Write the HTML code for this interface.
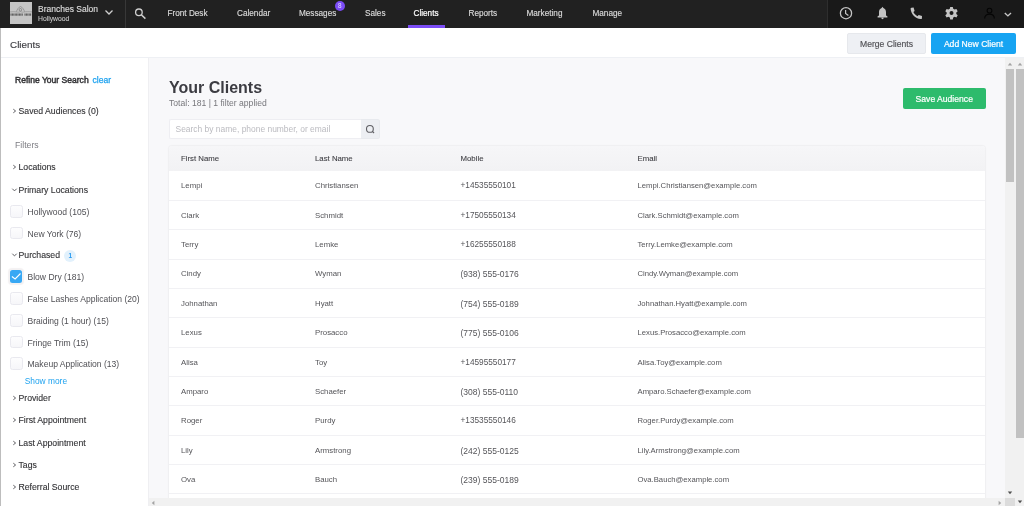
<!DOCTYPE html>
<html><head><meta charset="utf-8">
<style>
*{margin:0;padding:0;box-sizing:border-box}
html,body{width:1024px;height:506px;overflow:hidden;background:#fff;font-family:"Liberation Sans",sans-serif;}
.a{position:absolute;white-space:nowrap}
.nv{position:absolute;top:8px;height:12px;line-height:12px;font-size:8.2px;color:#dadada;-webkit-text-stroke:0.15px #dadada}
.t{position:absolute;white-space:nowrap;height:12px;line-height:12px}
</style></head><body>
<div style="position:absolute;left:0;top:0;width:1024px;height:506px;will-change:transform">
<div class="a" style="left:0px;top:0px;width:1024px;height:28px;background:#212121"></div>
<svg class="a" style="left:10px;top:2px" width="22" height="22" viewBox="0 0 22 22"><rect width="22" height="22" fill="#c5c5c5"/>
<circle cx="10.4" cy="7.8" r="1.3" stroke="#6a6a6a" stroke-width="0.6" fill="none"/>
<path d="M6.4 9.6 C7.2 7.4 8.6 5.2 10.5 4.5 C12.4 5.2 13.8 7.4 14.6 9.6" stroke="#7a7a7a" stroke-width="0.6" fill="none"/>
<path d="M0 9.9 C2.5 9.6 5 9.6 7 10 C8.5 10.3 9.5 10.2 10.5 9.6 C11.5 10.2 12.5 10.3 14 10 C16 9.6 19 9.6 22 9.9" stroke="#7a7a7a" stroke-width="0.5" fill="none"/>
<rect x="0.50" y="11.5" width="1.05" height="2.2" fill="#5c5c5c"/><rect x="1.90" y="11.5" width="1.05" height="2.2" fill="#5c5c5c"/><rect x="3.30" y="11.5" width="1.05" height="2.2" fill="#5c5c5c"/><rect x="4.70" y="11.5" width="1.05" height="2.2" fill="#5c5c5c"/><rect x="6.10" y="11.5" width="1.05" height="2.2" fill="#5c5c5c"/><rect x="7.50" y="11.5" width="1.05" height="2.2" fill="#5c5c5c"/><rect x="8.90" y="11.5" width="1.05" height="2.2" fill="#5c5c5c"/><rect x="10.30" y="11.5" width="1.05" height="2.2" fill="#5c5c5c"/><rect x="11.70" y="11.5" width="1.05" height="2.2" fill="#5c5c5c"/><rect x="14.50" y="11.5" width="1.05" height="2.2" fill="#5c5c5c"/><rect x="15.90" y="11.5" width="1.05" height="2.2" fill="#5c5c5c"/><rect x="17.30" y="11.5" width="1.05" height="2.2" fill="#5c5c5c"/><rect x="18.70" y="11.5" width="1.05" height="2.2" fill="#5c5c5c"/><rect x="20.10" y="11.5" width="1.05" height="2.2" fill="#5c5c5c"/>
</svg>
<div class="a" style="left:38px;top:3.4px;font-size:8.5px;line-height:12px;color:#dcdcdc;-webkit-text-stroke:0.15px #dcdcdc">Branches Salon</div>
<div class="a" style="left:38px;top:14px;font-size:6.8px;line-height:10px;color:#c4c4c4;-webkit-text-stroke:0.1px #c4c4c4">Hollywood</div>
<svg class="a" style="left:104px;top:9px" width="10" height="7" viewBox="0 0 10 7"><path d="M1.5 1.5 L5 5 L8.5 1.5" stroke="#cfcfcf" stroke-width="1.3" fill="none"/></svg>
<div class="a" style="left:125px;top:0px;width:1px;height:28px;background:#383838"></div>
<svg class="a" style="left:132px;top:6px" width="16" height="16" viewBox="0 0 16 16"><circle cx="6.9" cy="6.3" r="3.3" stroke="#cfcfcf" stroke-width="1.3" fill="none"/><path d="M9.3 8.8 L13.4 12.6" stroke="#cfcfcf" stroke-width="1.5"/></svg>
<div class="nv" style="left:167.5px">Front Desk</div>
<div class="nv" style="left:237px">Calendar</div>
<div class="nv" style="left:299px">Messages</div>
<div class="nv" style="left:365px">Sales</div>
<div class="nv" style="left:468.5px">Reports</div>
<div class="nv" style="left:526.5px">Marketing</div>
<div class="nv" style="left:592.5px">Manage</div>
<div class="nv" style="left:413.5px;color:#fff;-webkit-text-stroke:0.2px #fff">Clients</div>
<div class="a" style="left:334.7px;top:0.6px;width:10px;height:10px;border-radius:5px;background:#7b4cf6;color:#e6dcff;font-size:6.4px;line-height:10px;text-align:center">8</div>
<div class="a" style="left:408px;top:25.2px;width:37px;height:2.8px;background:#7b4cf6"></div>
<div class="a" style="left:827px;top:0px;width:197px;height:28px;background:#191919;border-left:1px solid #2e2e2e"></div>
<svg class="a" style="left:828px;top:0" width="196" height="28" viewBox="828 0 196 28">
    <circle cx="846" cy="13.2" r="5.6" stroke="#c4c4c4" stroke-width="1.3" fill="none"/>
    <path d="M845.6 10.1 V13.4 L848.4 15.5" stroke="#c4c4c4" stroke-width="1.2" fill="none"/>
    <path d="M882.5 6.8 L883.4 7.9 C885.1 8.6 886 10 886 12 V15.4 L887.4 16.2 V17.5 H877.6 V16.2 L879 15.4 V12 C879 10 879.9 8.6 881.6 7.9 Z" fill="#c4c4c4"/>
    <path d="M881.3 17.6 H883.7 C883.7 18.6 883.1 19.2 882.5 19.2 C881.9 19.2 881.3 18.6 881.3 17.6Z" fill="#c4c4c4"/>
    <path d="M911.5 7.7 L913.6 7.6 L914.6 10.9 L913.4 12 C914.1 13.6 915.5 15.2 917.5 16.2 L918.7 15.1 L922 15.9 L921.9 18.4 C921.8 18.9 921.3 19.2 920.7 19.1 C915.1 18.6 911.1 14.3 910.6 8.8 C910.6 8.2 910.9 7.8 911.5 7.7Z" fill="#c4c4c4"/>
    <g transform="translate(951.5 13.1)" fill="#c4c4c4">
      <path d="M-1.3 -6.1 H1.3 L1.7 -4.3 L3.1 -3.5 L4.9 -4.1 L6.2 -1.9 L4.8 -0.7 V0.9 L6.2 2.1 L4.9 4.3 L3.1 3.7 L1.7 4.5 L1.3 6.3 H-1.3 L-1.7 4.5 L-3.1 3.7 L-4.9 4.3 L-6.2 2.1 L-4.8 0.9 V-0.7 L-6.2 -1.9 L-4.9 -4.1 L-3.1 -3.5 L-1.7 -4.3Z M0 -2 A2 2 0 1 0 0 2 A2 2 0 1 0 0 -2Z" fill-rule="evenodd"/>
    </g>
    <circle cx="989.5" cy="10.6" r="2.4" stroke="#050505" stroke-width="1.1" fill="none"/>
    <path d="M984.7 18.4 C984.7 15.5 986.8 14.1 989.5 14.1 C992.2 14.1 994.3 15.5 994.3 18.4" stroke="#050505" stroke-width="1.1" fill="none"/>
    <path d="M1004.8 13 L1007.9 15.9 L1011 13" stroke="#c8c8c8" stroke-width="1.4" fill="none"/>
  </svg>
<div class="a" style="left:0px;top:28px;width:1024px;height:30px;background:#fff;border-bottom:1px solid #eef0f4"></div>
<div class="a" style="left:10px;top:38.5px;font-size:9.9px;line-height:12px;color:#3d3d42;-webkit-text-stroke:0.15px #3d3d42">Clients</div>
<div class="a" style="left:847px;top:33px;width:79px;height:21px;border-radius:2px;background:#eef0f4;border:1px solid #e6e8ec;color:#505055;line-height:21px;font-size:8.6px;text-align:center;-webkit-text-stroke:0.15px #505055">Merge Clients</div>
<div class="a" style="left:931px;top:33px;width:85px;height:21px;border-radius:2px;background:#17a4f2;color:#fff;line-height:22.5px;font-size:8.6px;text-align:center;-webkit-text-stroke:0.2px #fff">Add New Client</div>
<div class="a" style="left:0px;top:58px;width:149px;height:448px;background:#fff;border-right:1px solid #efeff2"></div>
<div class="a" style="left:0px;top:28px;width:1px;height:478px;background:#bdbdbd"></div>
<div class="t" style="left:15px;top:74.40px;height:12px;line-height:12px;font-size:8.55px;color:#333336;-webkit-text-stroke:0.45px #333336">Refine Your Search<span style="color:#1ea2ef;-webkit-text-stroke:0.25px #1ea2ef;font-size:8.6px;margin-left:3.8px">clear</span></div>
<svg class="a" style="left:11px;top:106.6px" width="6" height="8" viewBox="0 0 6 8"><path d="M2.3 2.2 L4.6 4 L2.3 5.8" stroke="#505055" stroke-width="0.9" fill="none"/></svg>
<div class="t" style="left:18.5px;top:104.90px;height:12px;line-height:12px;font-size:8.7px;color:#333336;-webkit-text-stroke:0.12px #333336">Saved Audiences (0)</div>
<svg class="a" style="left:11px;top:163.1px" width="6" height="8" viewBox="0 0 6 8"><path d="M2.3 2.2 L4.6 4 L2.3 5.8" stroke="#505055" stroke-width="0.9" fill="none"/></svg>
<div class="t" style="left:18.5px;top:161.40px;height:12px;line-height:12px;font-size:8.7px;color:#333336;-webkit-text-stroke:0.12px #333336">Locations</div>
<svg class="a" style="left:10px;top:186.7px" width="8" height="6" viewBox="0 0 8 6"><path d="M2.3 1.7 L4.5 3.9 L6.7 1.7" stroke="#505055" stroke-width="0.9" fill="none"/></svg>
<div class="t" style="left:18.5px;top:183.90px;height:12px;line-height:12px;font-size:8.7px;color:#333336;-webkit-text-stroke:0.12px #333336">Primary Locations</div>
<svg class="a" style="left:10px;top:252.2px" width="8" height="6" viewBox="0 0 8 6"><path d="M2.3 1.7 L4.5 3.9 L6.7 1.7" stroke="#505055" stroke-width="0.9" fill="none"/></svg>
<div class="t" style="left:18.5px;top:249.40px;height:12px;line-height:12px;font-size:8.7px;color:#333336;-webkit-text-stroke:0.12px #333336">Purchased</div>
<svg class="a" style="left:11px;top:394.1px" width="6" height="8" viewBox="0 0 6 8"><path d="M2.3 2.2 L4.6 4 L2.3 5.8" stroke="#505055" stroke-width="0.9" fill="none"/></svg>
<div class="t" style="left:18.5px;top:392.40px;height:12px;line-height:12px;font-size:8.7px;color:#333336;-webkit-text-stroke:0.12px #333336">Provider</div>
<svg class="a" style="left:11px;top:416.1px" width="6" height="8" viewBox="0 0 6 8"><path d="M2.3 2.2 L4.6 4 L2.3 5.8" stroke="#505055" stroke-width="0.9" fill="none"/></svg>
<div class="t" style="left:18.5px;top:414.40px;height:12px;line-height:12px;font-size:8.7px;color:#333336;-webkit-text-stroke:0.12px #333336">First Appointment</div>
<svg class="a" style="left:11px;top:438.6px" width="6" height="8" viewBox="0 0 6 8"><path d="M2.3 2.2 L4.6 4 L2.3 5.8" stroke="#505055" stroke-width="0.9" fill="none"/></svg>
<div class="t" style="left:18.5px;top:436.90px;height:12px;line-height:12px;font-size:8.7px;color:#333336;-webkit-text-stroke:0.12px #333336">Last Appointment</div>
<svg class="a" style="left:11px;top:460.6px" width="6" height="8" viewBox="0 0 6 8"><path d="M2.3 2.2 L4.6 4 L2.3 5.8" stroke="#505055" stroke-width="0.9" fill="none"/></svg>
<div class="t" style="left:18.5px;top:458.90px;height:12px;line-height:12px;font-size:8.7px;color:#333336;-webkit-text-stroke:0.12px #333336">Tags</div>
<svg class="a" style="left:11px;top:483.1px" width="6" height="8" viewBox="0 0 6 8"><path d="M2.3 2.2 L4.6 4 L2.3 5.8" stroke="#505055" stroke-width="0.9" fill="none"/></svg>
<div class="t" style="left:18.5px;top:481.40px;height:12px;line-height:12px;font-size:8.7px;color:#333336;-webkit-text-stroke:0.12px #333336">Referral Source</div>
<div class="t" style="left:15px;top:139.40px;height:12px;line-height:12px;font-size:8.7px;color:#7c7c82;">Filters</div>
<div class="a" style="left:10.3px;top:205.20px;width:12.4px;height:12.4px;border:1px solid #e9e9ef;border-radius:2.5px;background:linear-gradient(#fdfdfe,#f6f6f9)"></div>
<div class="t" style="left:27.5px;top:206.00px;height:12px;line-height:12px;font-size:8.55px;color:#505055;">Hollywood (105)</div>
<div class="a" style="left:10.3px;top:226.70px;width:12.4px;height:12.4px;border:1px solid #e9e9ef;border-radius:2.5px;background:linear-gradient(#fdfdfe,#f6f6f9)"></div>
<div class="t" style="left:27.5px;top:227.50px;height:12px;line-height:12px;font-size:8.55px;color:#505055;">New York (76)</div>
<div class="a" style="left:10.3px;top:270.40px;width:12.2px;height:12.2px;border-radius:2.5px;background:#38a8f4;box-shadow:0 0 1px 1.5px #f3f1f2"><svg class="a" style="left:0;top:0" width="12" height="12" viewBox="0 0 12 12"><path d="M1.9 6.5 L5.1 8.9 L10.5 3.5" stroke="#fff" stroke-width="1.1" fill="none"/></svg></div>
<div class="t" style="left:27.5px;top:271.00px;height:12px;line-height:12px;font-size:8.55px;color:#505055;">Blow Dry (181)</div>
<div class="a" style="left:10.3px;top:292.20px;width:12.4px;height:12.4px;border:1px solid #e9e9ef;border-radius:2.5px;background:linear-gradient(#fdfdfe,#f6f6f9)"></div>
<div class="t" style="left:27.5px;top:293.00px;height:12px;line-height:12px;font-size:8.55px;color:#505055;">False Lashes Application (20)</div>
<div class="a" style="left:10.3px;top:314.20px;width:12.4px;height:12.4px;border:1px solid #e9e9ef;border-radius:2.5px;background:linear-gradient(#fdfdfe,#f6f6f9)"></div>
<div class="t" style="left:27.5px;top:315.00px;height:12px;line-height:12px;font-size:8.55px;color:#505055;">Braiding (1 hour) (15)</div>
<div class="a" style="left:10.3px;top:335.70px;width:12.4px;height:12.4px;border:1px solid #e9e9ef;border-radius:2.5px;background:linear-gradient(#fdfdfe,#f6f6f9)"></div>
<div class="t" style="left:27.5px;top:336.50px;height:12px;line-height:12px;font-size:8.55px;color:#505055;">Fringe Trim (15)</div>
<div class="a" style="left:10.3px;top:357.20px;width:12.4px;height:12.4px;border:1px solid #e9e9ef;border-radius:2.5px;background:linear-gradient(#fdfdfe,#f6f6f9)"></div>
<div class="t" style="left:27.5px;top:358.00px;height:12px;line-height:12px;font-size:8.55px;color:#505055;">Makeup Application (13)</div>
<div class="a" style="left:64.3px;top:249.6px;width:12px;height:12px;border-radius:6px;background:#e2f1fc;color:#2a9bf0;font-size:6.5px;font-weight:bold;line-height:12px;text-align:center">1</div>
<div class="t" style="left:24.7px;top:375.00px;height:12px;line-height:12px;font-size:8.4px;color:#1ea2ef;">Show more</div>
<div class="a" style="left:149px;top:58px;width:856px;height:440px;background:#f8f8fa"></div>
<div class="a" style="left:169px;top:75.9px;font-size:16px;line-height:24px;font-weight:bold;color:#3c3c42">Your Clients</div>
<div class="a" style="left:169px;top:96.9px;font-size:8.6px;line-height:12px;color:#77777c">Total: 181 | 1 filter applied</div>
<div class="a" style="left:903px;top:88px;width:82.5px;height:21px;border-radius:2px;background:#2dbb6c;color:#fff;font-size:8.6px;line-height:22.5px;text-align:center;-webkit-text-stroke:0.2px #fff">Save Audience</div>
<div class="a" style="left:169px;top:119.2px;width:192px;height:20px;background:#fff;border:1px solid #eeeef2;border-right:none;border-radius:2px 0 0 2px;color:#bbbbc0;font-size:8.45px;line-height:18px;padding-left:5.5px">Search by name, phone number, or email</div>
<div class="a" style="left:361px;top:119.2px;width:18.8px;height:20px;background:#edeff3;border:1px solid #e8eaee;border-left:none;border-radius:0 2.5px 2.5px 0"></div>
<svg class="a" style="left:361px;top:119px" width="19" height="20" viewBox="361 119 19 20"><circle cx="369.9" cy="128.9" r="3.4" stroke="#5f5f64" stroke-width="1.1" fill="none"/><path d="M372.4 131.4 L374 133" stroke="#5f5f64" stroke-width="1.2"/></svg>
<div style="position:absolute;left:149px;top:58px;width:856px;height:440px;overflow:hidden">
<div class="a" style="left:20px;top:88.30000000000001px;width:816px;height:400px;background:#fff;border-radius:2px;box-shadow:0 0 1.5px rgba(0,0,20,0.16)"></div>
<div class="a" style="left:20px;top:88.30000000000001px;width:816px;height:24.5px;background:linear-gradient(#f6f6f8,#f2f2f4);border-radius:2px 2px 0 0"></div>
</div>
<div class="t" style="left:181px;top:152.50px;height:12px;line-height:12px;font-size:7.8px;color:#3f3f44;-webkit-text-stroke:0.1px #3f3f44">First Name</div>
<div class="t" style="left:315px;top:152.50px;height:12px;line-height:12px;font-size:7.8px;color:#3f3f44;-webkit-text-stroke:0.1px #3f3f44">Last Name</div>
<div class="t" style="left:460.5px;top:152.50px;height:12px;line-height:12px;font-size:7.8px;color:#3f3f44;-webkit-text-stroke:0.1px #3f3f44">Mobile</div>
<div class="t" style="left:637.5px;top:152.50px;height:12px;line-height:12px;font-size:7.8px;color:#3f3f44;-webkit-text-stroke:0.1px #3f3f44">Email</div>
<div class="a" style="left:169px;top:493px;width:816px;height:1px;background:#f1f1f4"></div>
<div class="t" style="left:181px;top:180.20px;height:12px;line-height:12px;font-size:7.8px;color:#555559;">Lempi</div>
<div class="t" style="left:315px;top:180.20px;height:12px;line-height:12px;font-size:7.8px;color:#555559;">Christiansen</div>
<div class="t" style="left:460.5px;top:180.20px;height:12px;line-height:12px;font-size:8.25px;color:#555559;">+14535550101</div>
<div class="t" style="left:637.5px;top:180.20px;height:12px;line-height:12px;font-size:7.7px;color:#555559;">Lempi.Christiansen@example.com</div>
<div class="a" style="left:169px;top:200px;width:816px;height:1px;background:#f1f1f4"></div>
<div class="t" style="left:181px;top:209.60px;height:12px;line-height:12px;font-size:7.8px;color:#555559;">Clark</div>
<div class="t" style="left:315px;top:209.60px;height:12px;line-height:12px;font-size:7.8px;color:#555559;">Schmidt</div>
<div class="t" style="left:460.5px;top:209.60px;height:12px;line-height:12px;font-size:8.25px;color:#555559;">+17505550134</div>
<div class="t" style="left:637.5px;top:209.60px;height:12px;line-height:12px;font-size:7.7px;color:#555559;">Clark.Schmidt@example.com</div>
<div class="a" style="left:169px;top:229px;width:816px;height:1px;background:#f1f1f4"></div>
<div class="t" style="left:181px;top:239.00px;height:12px;line-height:12px;font-size:7.8px;color:#555559;">Terry</div>
<div class="t" style="left:315px;top:239.00px;height:12px;line-height:12px;font-size:7.8px;color:#555559;">Lemke</div>
<div class="t" style="left:460.5px;top:239.00px;height:12px;line-height:12px;font-size:8.25px;color:#555559;">+16255550188</div>
<div class="t" style="left:637.5px;top:239.00px;height:12px;line-height:12px;font-size:7.7px;color:#555559;">Terry.Lemke@example.com</div>
<div class="a" style="left:169px;top:259px;width:816px;height:1px;background:#f1f1f4"></div>
<div class="t" style="left:181px;top:268.40px;height:12px;line-height:12px;font-size:7.8px;color:#555559;">Cindy</div>
<div class="t" style="left:315px;top:268.40px;height:12px;line-height:12px;font-size:7.8px;color:#555559;">Wyman</div>
<div class="t" style="left:460.5px;top:268.40px;height:12px;line-height:12px;font-size:8.5px;color:#555559;">(938) 555-0176</div>
<div class="t" style="left:637.5px;top:268.40px;height:12px;line-height:12px;font-size:7.7px;color:#555559;">Cindy.Wyman@example.com</div>
<div class="a" style="left:169px;top:288px;width:816px;height:1px;background:#f1f1f4"></div>
<div class="t" style="left:181px;top:297.80px;height:12px;line-height:12px;font-size:7.8px;color:#555559;">Johnathan</div>
<div class="t" style="left:315px;top:297.80px;height:12px;line-height:12px;font-size:7.8px;color:#555559;">Hyatt</div>
<div class="t" style="left:460.5px;top:297.80px;height:12px;line-height:12px;font-size:8.5px;color:#555559;">(754) 555-0189</div>
<div class="t" style="left:637.5px;top:297.80px;height:12px;line-height:12px;font-size:7.7px;color:#555559;">Johnathan.Hyatt@example.com</div>
<div class="a" style="left:169px;top:317px;width:816px;height:1px;background:#f1f1f4"></div>
<div class="t" style="left:181px;top:327.20px;height:12px;line-height:12px;font-size:7.8px;color:#555559;">Lexus</div>
<div class="t" style="left:315px;top:327.20px;height:12px;line-height:12px;font-size:7.8px;color:#555559;">Prosacco</div>
<div class="t" style="left:460.5px;top:327.20px;height:12px;line-height:12px;font-size:8.5px;color:#555559;">(775) 555-0106</div>
<div class="t" style="left:637.5px;top:327.20px;height:12px;line-height:12px;font-size:7.7px;color:#555559;">Lexus.Prosacco@example.com</div>
<div class="a" style="left:169px;top:347px;width:816px;height:1px;background:#f1f1f4"></div>
<div class="t" style="left:181px;top:356.60px;height:12px;line-height:12px;font-size:7.8px;color:#555559;">Alisa</div>
<div class="t" style="left:315px;top:356.60px;height:12px;line-height:12px;font-size:7.8px;color:#555559;">Toy</div>
<div class="t" style="left:460.5px;top:356.60px;height:12px;line-height:12px;font-size:8.25px;color:#555559;">+14595550177</div>
<div class="t" style="left:637.5px;top:356.60px;height:12px;line-height:12px;font-size:7.7px;color:#555559;">Alisa.Toy@example.com</div>
<div class="a" style="left:169px;top:376px;width:816px;height:1px;background:#f1f1f4"></div>
<div class="t" style="left:181px;top:386.00px;height:12px;line-height:12px;font-size:7.8px;color:#555559;">Amparo</div>
<div class="t" style="left:315px;top:386.00px;height:12px;line-height:12px;font-size:7.8px;color:#555559;">Schaefer</div>
<div class="t" style="left:460.5px;top:386.00px;height:12px;line-height:12px;font-size:8.5px;color:#555559;">(308) 555-0110</div>
<div class="t" style="left:637.5px;top:386.00px;height:12px;line-height:12px;font-size:7.7px;color:#555559;">Amparo.Schaefer@example.com</div>
<div class="a" style="left:169px;top:405px;width:816px;height:1px;background:#f1f1f4"></div>
<div class="t" style="left:181px;top:415.40px;height:12px;line-height:12px;font-size:7.8px;color:#555559;">Roger</div>
<div class="t" style="left:315px;top:415.40px;height:12px;line-height:12px;font-size:7.8px;color:#555559;">Purdy</div>
<div class="t" style="left:460.5px;top:415.40px;height:12px;line-height:12px;font-size:8.25px;color:#555559;">+13535550146</div>
<div class="t" style="left:637.5px;top:415.40px;height:12px;line-height:12px;font-size:7.7px;color:#555559;">Roger.Purdy@example.com</div>
<div class="a" style="left:169px;top:435px;width:816px;height:1px;background:#f1f1f4"></div>
<div class="t" style="left:181px;top:444.80px;height:12px;line-height:12px;font-size:7.8px;color:#555559;">Lily</div>
<div class="t" style="left:315px;top:444.80px;height:12px;line-height:12px;font-size:7.8px;color:#555559;">Armstrong</div>
<div class="t" style="left:460.5px;top:444.80px;height:12px;line-height:12px;font-size:8.5px;color:#555559;">(242) 555-0125</div>
<div class="t" style="left:637.5px;top:444.80px;height:12px;line-height:12px;font-size:7.7px;color:#555559;">Lily.Armstrong@example.com</div>
<div class="a" style="left:169px;top:464px;width:816px;height:1px;background:#f1f1f4"></div>
<div class="t" style="left:181px;top:474.20px;height:12px;line-height:12px;font-size:7.8px;color:#555559;">Ova</div>
<div class="t" style="left:315px;top:474.20px;height:12px;line-height:12px;font-size:7.8px;color:#555559;">Bauch</div>
<div class="t" style="left:460.5px;top:474.20px;height:12px;line-height:12px;font-size:8.5px;color:#555559;">(239) 555-0189</div>
<div class="t" style="left:637.5px;top:474.20px;height:12px;line-height:12px;font-size:7.7px;color:#555559;">Ova.Bauch@example.com</div>
<div class="a" style="left:1005px;top:58px;width:10px;height:440px;background:#f1f1f1"></div>
<div class="a" style="left:1006px;top:69px;width:8px;height:113px;background:#c1c1c1"></div>
<div class="a" style="left:1015px;top:58px;width:9px;height:448px;background:#f1f1f1"></div>
<div class="a" style="left:1016px;top:69px;width:8px;height:369px;background:#c1c1c1"></div>
<div class="a" style="left:149px;top:498px;width:856px;height:8px;background:#f1f1f1"></div>
<div class="a" style="left:1005px;top:498px;width:10px;height:8px;background:#dcdcdc"></div>
<svg class="a" style="left:1007px;top:62px" width="6" height="4" viewBox="0 0 6 4"><path d="M0.8 3.4 L3 0.8 L5.2 3.4Z" fill="#a3a3a3"/></svg>
<svg class="a" style="left:1017px;top:62px" width="6" height="4" viewBox="0 0 6 4"><path d="M0.8 3.4 L3 0.8 L5.2 3.4Z" fill="#a3a3a3"/></svg>
<svg class="a" style="left:1007px;top:491px" width="6" height="4" viewBox="0 0 6 4"><path d="M0.8 0.6 L3 3.2 L5.2 0.6Z" fill="#505050"/></svg>
<svg class="a" style="left:1017px;top:500px" width="6" height="4" viewBox="0 0 6 4"><path d="M0.8 0.6 L3 3.2 L5.2 0.6Z" fill="#505050"/></svg>
<svg class="a" style="left:998px;top:500px" width="4" height="6" viewBox="0 0 4 6"><path d="M0.6 0.8 L3.2 3 L0.6 5.2Z" fill="#a3a3a3"/></svg>
<svg class="a" style="left:151px;top:500px" width="4" height="6" viewBox="0 0 4 6"><path d="M3.4 0.8 L0.8 3 L3.4 5.2Z" fill="#a3a3a3"/></svg>
</div>
</body></html>
